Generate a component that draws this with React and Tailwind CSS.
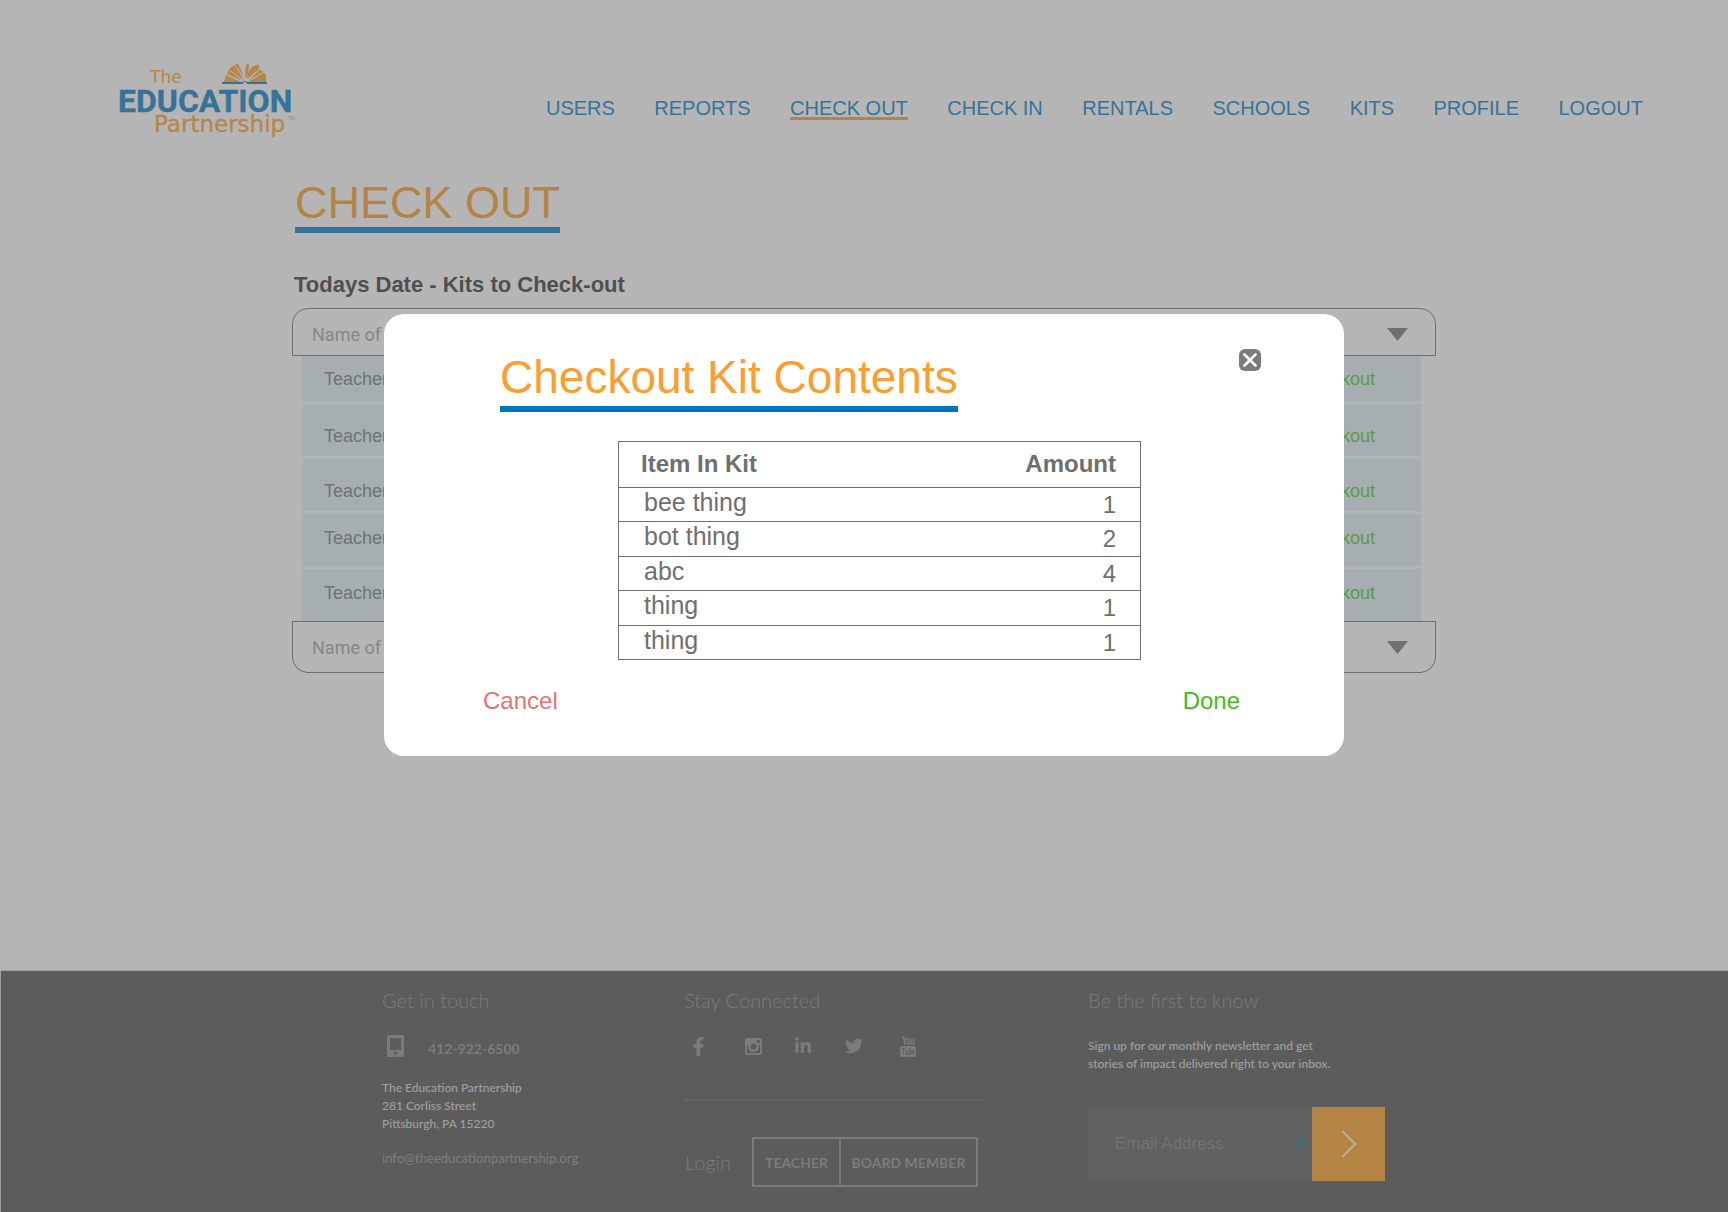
import React from "react";
import { FaFacebookF, FaLinkedinIn, FaTwitter } from "react-icons/fa";

const links = ["USERS", "REPORTS", "CHECK OUT", "CHECK IN", "RENTALS", "SCHOOLS", "KITS", "PROFILE", "LOGOUT"];

const items = [
  ["bee thing", 1],
  ["bot thing", 2],
  ["abc", 4],
  ["thing", 1],
  ["thing", 1],
];

const rows = ["pt-[11px] h-[45px]", "pt-5 h-[52px]", "pt-5 h-[52px]", "pt-3 h-[52px]", "pt-3 h-[52px]"];

function Logo() {
  return (
    <svg width="176" height="80" viewBox="0 0 176 80" role="img" aria-label="The Education Partnership" className="shrink-0 overflow-visible">
      <text x="30" y="23" fontSize="17" fill="#b58648" fontFamily="'DejaVu Sans', sans-serif">The</text>
      <text x="-2" y="52" fontSize="32" fontWeight="700" fill="#377398" stroke="#377398" strokeWidth="0.4" fontFamily="Roboto, sans-serif">EDUCATION</text>
      <text x="34" y="72" fontSize="23" fill="#b58648" stroke="#b58648" strokeWidth="0.3" fontFamily="'DejaVu Sans', sans-serif">Partnership</text>
      <text x="168" y="60" fontSize="5" fill="#b58648" fontFamily="'Liberation Sans', sans-serif">TM</text>
      <g fill="#b58648">
        <path d="M104 22L106 15L121 22Z" />
        <path d="M107 14L109 10L123 21Z" />
        <path d="M109 9.500Q111 6 115 5.500L124 20Z" />
        <path d="M115 4.500L118 3.500L124.800 18Z" />
        <path d="M126 19Q124 8 127.500 3L129 4Q129 12 126 19Z" />
        <path d="M127 19Q128 10 132 7Q135 5 139 5L139 9Z" />
        <path d="M127.500 21L140 9.500L143 12Z" />
        <path d="M128 22L144 12.500L146 15V22Z" />
      </g>
      <path d="M102 22H122Q125 20 128 22H147V24H102Z" fill="#377398" />
      <ellipse cx="125" cy="23" rx="2" ry="1" fill="#b5b5b5" />
    </svg>
  );
}

function Triangle() {
  return (
    <svg width="21" height="13" viewBox="0 0 21 13" aria-hidden="true">
      <path d="M0 0H21L10.500 13Z" fill="#6f6f6f" />
    </svg>
  );
}

function Instagram() {
  return (
    <svg width="17" height="17" viewBox="0 0 17 17" aria-hidden="true">
      <path
        fill="currentColor"
        fillRule="evenodd"
        d="M2 0H15Q17 0 17 2V15Q17 17 15 17H2Q0 17 0 15V2Q0 0 2 0ZM12 2V5H15V2ZM2 7V15H15V7H13.200A5 5 0 1 1 3.800 7Z"
      />
      <circle cx="8.500" cy="8.500" r="5.500" fill="currentColor" />
      <circle cx="8.500" cy="8.500" r="3" fill="#5c5c5c" />
    </svg>
  );
}

function YouTube() {
  return (
    <svg width="16" height="21" viewBox="0 0 16 21" aria-hidden="true">
      <path d="M2.500 0.500L4.500 5V9M6.500 0.500L4.500 5" fill="none" stroke="currentColor" strokeWidth="1.500" />
      <rect x="7" y="3" width="2.400" height="5.500" rx="1.200" fill="none" stroke="currentColor" strokeWidth="1.300" />
      <path d="M11.200 2.500V7.500Q11.800 9 13.500 7.500M13.600 2.500V9" fill="none" stroke="currentColor" strokeWidth="1.300" />
      <rect x="0" y="10" width="16" height="11" rx="2.500" fill="currentColor" />
      <path d="M2 12.500H5M3.500 12.500V19M6 14V18.500H8V14M9.700 12V18.500H11.300V14.500H9.700M14.500 18.500H12.800V14.500H14.500V16.500H12.800" fill="none" stroke="#5c5c5c" strokeWidth="0.800" />
    </svg>
  );
}

function Navigation() {
  return (
    <header className="flex items-start pt-15 pr-[85px] pl-[120px]">
      <Logo />
      <nav className="mt-[39px] ml-[250px] flex flex-1 justify-between text-[20px] leading-[18px] whitespace-nowrap text-[#377398]">
        {links.map((l) => (
          <a key={l} href="#" className={l === "CHECK OUT" ? "border-b-[3px] border-[#b38445]" : ""}>
            {l}
          </a>
        ))}
      </nav>
    </header>
  );
}

function KitList() {
  return (
    <main className="mx-auto w-full max-w-[1144px]">
      <h1 className="mt-[38px] ml-[3px] w-fit border-b-[6px] border-[#377398] text-[45px] leading-[49px] text-[#b38445]">CHECK OUT</h1>
      <h2 className="mt-[38px] ml-[2px] text-[22px] leading-7 font-bold text-[#4f4f4f]">Todays Date - Kits to Check-out</h2>
      <button className="mt-[9px] flex h-12 w-full items-center justify-between rounded-t-2xl border border-[#6d6d6d] pt-1 pr-[27px] pl-[19px] font-[Roboto,sans-serif] text-[18px] text-[#858787]">
        Name of School
        <Triangle />
      </button>
      <ul className="mr-[15px] ml-[10px] flex flex-col gap-[3px] bg-[#b0b4b6] text-[18px] leading-6">
        {rows.map((r, i) => (
          <li key={i} className={`flex items-start justify-between bg-[#a7aeb2] pr-[46px] pl-[22px] ${r}`}>
            <span className="text-[#6f7374]">Teacher</span>
            <button className="text-[#5a9a46]">Checkout</button>
          </li>
        ))}
      </ul>
      <button className="flex h-[52px] w-full items-center justify-between rounded-b-2xl border border-[#6d6d6d] pr-[27px] pl-[19px] font-[Roboto,sans-serif] text-[18px] text-[#858787]">
        Name of School
        <Triangle />
      </button>
    </main>
  );
}

function Footer() {
  return (
    <footer className="mt-auto flex h-[242px] border-t border-l border-[#a0a0a0] bg-[#5c5c5c] pt-[15px] pl-[381px] font-[Lato,sans-serif] text-[#7b7b7b]">
      <section className="w-[302px]">
        <h3 className="text-[20px] leading-7 font-light">Get in touch</h3>
        <div className="mt-5 flex h-6 items-center gap-6 pl-[5px]">
          <svg width="17" height="22" viewBox="0 0 17 22" aria-hidden="true">
            <path fill="currentColor" fillRule="evenodd" d="M1.500 0H15.500Q17 0 17 1.500V20.500Q17 22 15.500 22H1.500Q0 22 0 20.500V1.500Q0 0 1.500 0ZM3 3V15H14V3ZM8.500 16.500A1.700 1.700 0 1 0 8.500 19.900A1.700 1.700 0 1 0 8.500 16.500Z" />
          </svg>
          <a href="tel:4129226500" className="pt-1 text-[14px] font-bold">412-922-6500</a>
        </div>
        <address className="mt-[21px] text-[12px] leading-[18px] font-medium text-[#a0a0a0] not-italic">
          The Education Partnership
          <br />
          281 Corliss Street
          <br />
          Pittsburgh, PA 15220
        </address>
        <a href="#" className="mt-4 block text-[13px] leading-[18px] font-medium">info@theeducationpartnership.org</a>
      </section>
      <section className="w-[299px]">
        <h3 className="text-[20px] leading-7 font-light">Stay Connected</h3>
        <div className="mt-5 flex h-6 items-center pl-[5px]">
          <a href="#" aria-label="Facebook" className="w-14"><FaFacebookF size={19} /></a>
          <a href="#" aria-label="Instagram" className="w-[49px]"><Instagram /></a>
          <a href="#" aria-label="LinkedIn" className="w-[51px]"><FaLinkedinIn size={18} /></a>
          <a href="#" aria-label="Twitter" className="w-[55px]"><FaTwitter size={18} /></a>
          <a href="#" aria-label="YouTube"><YouTube /></a>
        </div>
        <hr className="mt-[41px] border-t-2 border-[#636363]" />
        <div className="mt-9 flex items-center pl-[1px]">
          <span className="w-[67px] text-[20px] leading-7 font-light">Login</span>
          <div className="flex h-[50px] divide-x-2 divide-[#7b7b7b] border-2 border-[#7b7b7b] text-[14px] font-bold whitespace-nowrap">
            <button className="w-[87px]">TEACHER</button>
            <button className="w-[135px]">BOARD MEMBER</button>
          </div>
        </div>
      </section>
      <section className="ml-[105px]">
        <h3 className="text-[20px] leading-7 font-light">Be the first to know</h3>
        <p className="mt-[23px] text-[12px] leading-[18px] font-medium text-[#a0a0a0]">
          Sign up for our monthly newsletter and get
          <br />
          stories of impact delivered right to your inbox.
        </p>
        <form className="mt-[34px] flex h-[74px] w-[297px]">
          <div className="flex flex-1 items-center bg-[#616161]">
            <input
              type="email"
              aria-label="Email Address"
              placeholder="Email Address"
              className="w-[204px] bg-transparent pl-[27px] font-['Liberation_Sans',sans-serif] text-[17px] outline-none placeholder:text-[#727272]"
            />
            <svg width="18" height="12" viewBox="0 0 18 12" aria-hidden="true">
              <path d="M0 11Q5 7 9 4M7 1L11 1L10 5L18 5M3 6H10L7 7" fill="none" stroke="#34727f" strokeWidth="1.400" />
            </svg>
          </div>
          <button type="button" aria-label="Subscribe" className="flex w-[73px] items-center justify-center bg-[#b38443]">
            <svg width="16" height="28" viewBox="0 0 16 28" aria-hidden="true">
              <path d="M1 1L14.500 14L1 27" fill="none" stroke="#bcaea0" strokeWidth="2" />
            </svg>
          </button>
        </form>
      </section>
    </footer>
  );
}

function KitDialog() {
  return (
    <div className="fixed inset-0 flex items-start justify-center pt-[314px]">
      <div role="dialog" aria-labelledby="kit-title" className="w-full max-w-[960px] rounded-[20px] bg-white pb-[39px]">
        <div className="flex items-start justify-between pt-[35px] pr-[83px] pl-[116px]">
          <h2 id="kit-title" className="border-b-[6px] border-[#0075c1] text-[46px] leading-[57px] text-[#fc9d2f]">Checkout Kit Contents</h2>
          <button aria-label="Close" className="h-[22px] w-[22px] rounded-md bg-[#7b7b7b]">
            <svg width="22" height="22" viewBox="0 0 22 22" aria-hidden="true">
              <path d="M5.500 5.500L16.500 16.500M16.500 5.500L5.500 16.500" stroke="white" strokeWidth="2.600" strokeLinecap="round" />
            </svg>
          </button>
        </div>
        <table className="mt-[29px] ml-[234px] h-[219px] w-[523px] border-collapse border border-[#6f6f6f] text-[#6f6f6f]">
          <thead>
            <tr className="h-[46px] border border-[#6f6f6f] text-[24px] leading-7">
              <th className="pb-[2px] pl-[22px] text-left">Item In Kit</th>
              <th className="pr-6 pb-[2px] text-right">Amount</th>
            </tr>
          </thead>
          <tbody className="text-[25px]">
            {items.map(([name, n], i) => (
              <tr key={i} className="border border-[#6f6f6f]">
                <td className="pl-[25px] align-top leading-7">{name}</td>
                <td className="pr-6 text-right align-top text-[24px] leading-[33px]">{n}</td>
              </tr>
            ))}
          </tbody>
        </table>
        <div className="mt-[25px] flex justify-between pr-[104px] pl-[99px] text-[24px] leading-8">
          <button className="text-[#e07474]">Cancel</button>
          <button className="text-[#43bb1b]">Done</button>
        </div>
      </div>
    </div>
  );
}

export default function App() {
  return (
    <div className="flex min-h-screen flex-col bg-[#b5b5b5] font-['Liberation_Sans',Arial,sans-serif]">
      <Navigation />
      <KitList />
      <Footer />
      <KitDialog />
    </div>
  );
}
